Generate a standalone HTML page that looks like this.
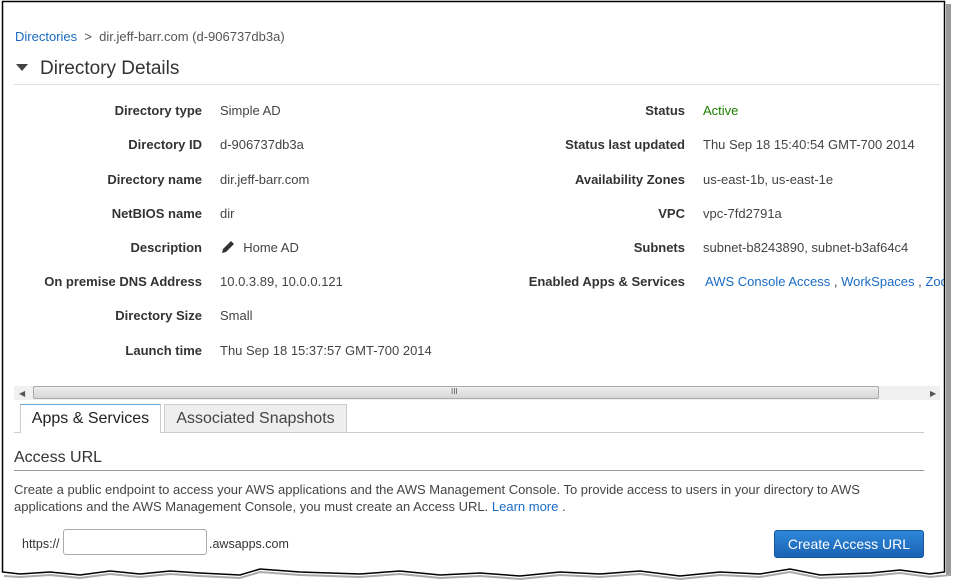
<!DOCTYPE html>
<html><head><style>
body{margin:0;width:955px;height:586px;background:#fff;position:relative;overflow:hidden;font-family:"Liberation Sans",Arial,sans-serif;color:#444}
.a{position:absolute;white-space:nowrap}
.l{font-weight:bold;font-size:13px;color:#333;text-align:right}
.v{font-size:13px;color:#444}
a{color:#1a6bc4;text-decoration:none}
</style></head><body>
<svg class="a" style="left:0;top:0" width="955" height="586">
<rect x="946" y="4" width="5" height="572" fill="#999"/>
<path d="M2.5 1.5H944.5V572 L930 574 L900 570 L870 573 L820 575 L790 569 L760 574 L720 572 L680 576 L640 571 L600 574 L560 572 L520 576 L480 573 L440 575 L400 571 L360 574 L300 572 L260 569 L240 575 L200 573 L170 571 L140 574 L110 571 L80 575 L50 572 L20 574 L2.5 572Z" fill="#fff" stroke="#000" stroke-width="1.5"/>
<path d="M4 576 L20 577 L50 575 L80 578 L110 574 L140 577 L170 574 L200 576 L240 578 L260 572 L300 575 L360 577 L400 574 L440 578 L480 576 L520 579 L560 575 L600 577 L640 574 L680 579 L720 575 L760 577 L790 572 L820 578 L870 576 L900 573 L930 577 L950 575" fill="none" stroke="#aaa" stroke-width="2"/>
<line x1="14" y1="84.5" x2="940" y2="84.5" stroke="#ddd"/>
<polygon points="16,64 28,64 22,71" fill="#444"/>
</svg>
<div class="a" style="left:15px;top:29px;font-size:13px"><a>Directories</a> <span style="color:#555">&nbsp;&gt;&nbsp; dir.jeff-barr.com (d-906737db3a)</span></div>
<div class="a" style="left:40px;top:58px;font-size:19px;color:#333">Directory Details</div>

<div class="a l" style="right:753px;top:103px">Directory type</div><div class="a v" style="left:220px;top:103px">Simple AD</div>
<div class="a l" style="right:753px;top:137px">Directory ID</div><div class="a v" style="left:220px;top:137px">d-906737db3a</div>
<div class="a l" style="right:753px;top:172px">Directory name</div><div class="a v" style="left:220px;top:172px">dir.jeff-barr.com</div>
<div class="a l" style="right:753px;top:206px">NetBIOS name</div><div class="a v" style="left:220px;top:206px">dir</div>
<div class="a l" style="right:753px;top:240px">Description</div><div class="a v" style="left:220px;top:240px"><svg width="16" height="14" style="vertical-align:-2px"><path d="M2 13 L3 9 L11 1 L14 4 L6 12Z" fill="#333"/></svg>&nbsp; Home AD</div>
<div class="a l" style="right:753px;top:274px">On premise DNS Address</div><div class="a v" style="left:220px;top:274px">10.0.3.89, 10.0.0.121</div>
<div class="a l" style="right:753px;top:308px">Directory Size</div><div class="a v" style="left:220px;top:308px">Small</div>
<div class="a l" style="right:753px;top:343px">Launch time</div><div class="a v" style="left:220px;top:343px">Thu Sep 18 15:37:57 GMT-700 2014</div>

<div class="a l" style="right:270px;top:103px">Status</div><div class="a v" style="left:703px;top:103px;color:#1d8102">Active</div>
<div class="a l" style="right:270px;top:137px">Status last updated</div><div class="a v" style="left:703px;top:137px">Thu Sep 18 15:40:54 GMT-700 2014</div>
<div class="a l" style="right:270px;top:172px">Availability Zones</div><div class="a v" style="left:703px;top:172px">us-east-1b, us-east-1e</div>
<div class="a l" style="right:270px;top:206px">VPC</div><div class="a v" style="left:703px;top:206px">vpc-7fd2791a</div>
<div class="a l" style="right:270px;top:240px">Subnets</div><div class="a v" style="left:703px;top:240px">subnet-b8243890, subnet-b3af64c4</div>
<div class="a l" style="right:270px;top:274px">Enabled Apps &amp; Services</div><div class="a v" style="left:705px;top:274px;width:239px;overflow:hidden"><a>AWS Console Access</a> , <a>WorkSpaces</a> , <a>Zocalo</a></div>

<div class="a" style="left:14px;top:386px;width:926px;height:14px;background:#f0f0f0"></div>
<div class="a" style="left:19px;top:389px;font-size:8px;color:#555">◀</div>
<div class="a" style="left:930px;top:389px;font-size:8px;color:#555">▶</div>
<div class="a" style="left:33px;top:386px;width:846px;height:13px;background:linear-gradient(#eee,#d6d6d6);border:1px solid #aaa;border-radius:2px;box-sizing:border-box"></div>
<div class="a" style="left:451px;top:387px;font-size:8px;color:#555">III</div>

<div class="a" style="left:14px;top:432px;width:910px;border-top:1px solid #ccc"></div>
<div class="a" style="left:20px;top:404px;width:141px;height:29px;background:#fff;border:1px solid #ccc;border-top:1px solid #6aa7d9;border-bottom:none;box-sizing:border-box;font-size:16px;color:#222;text-align:center;line-height:28px">Apps &amp; Services</div>
<div class="a" style="left:164px;top:404px;width:183px;height:28px;background:#eee;border:1px solid #ccc;border-bottom:none;box-sizing:border-box;font-size:16px;color:#444;text-align:center;line-height:28px">Associated Snapshots</div>

<div class="a" style="left:14px;top:449px;font-size:16px;color:#333">Access URL</div>
<div class="a" style="left:14px;top:470px;width:910px;border-top:1px solid #999"></div>
<div class="a" style="left:14px;top:481px;font-size:13px;color:#444;line-height:17px">Create a public endpoint to access your AWS applications and the AWS Management Console. To provide access to users in your directory to AWS<br>applications and the AWS Management Console, you must create an Access URL. <a>Learn more</a> .</div>
<div class="a" style="left:22px;top:537px;font-size:12.5px;color:#333">https://</div>
<div class="a" style="left:63px;top:529px;width:144px;height:26px;border:1px solid #aaa;border-radius:3px;box-sizing:border-box"></div>
<div class="a" style="left:209px;top:537px;font-size:12.5px;color:#333">.awsapps.com</div>
<div class="a" style="left:774px;top:530px;width:150px;height:28px;background:linear-gradient(#2f88d8,#1a62b5);border:1px solid #15569f;border-radius:3px;box-sizing:border-box;color:#fff;font-size:14px;text-align:center;line-height:26px">Create Access URL</div>
</body></html>
